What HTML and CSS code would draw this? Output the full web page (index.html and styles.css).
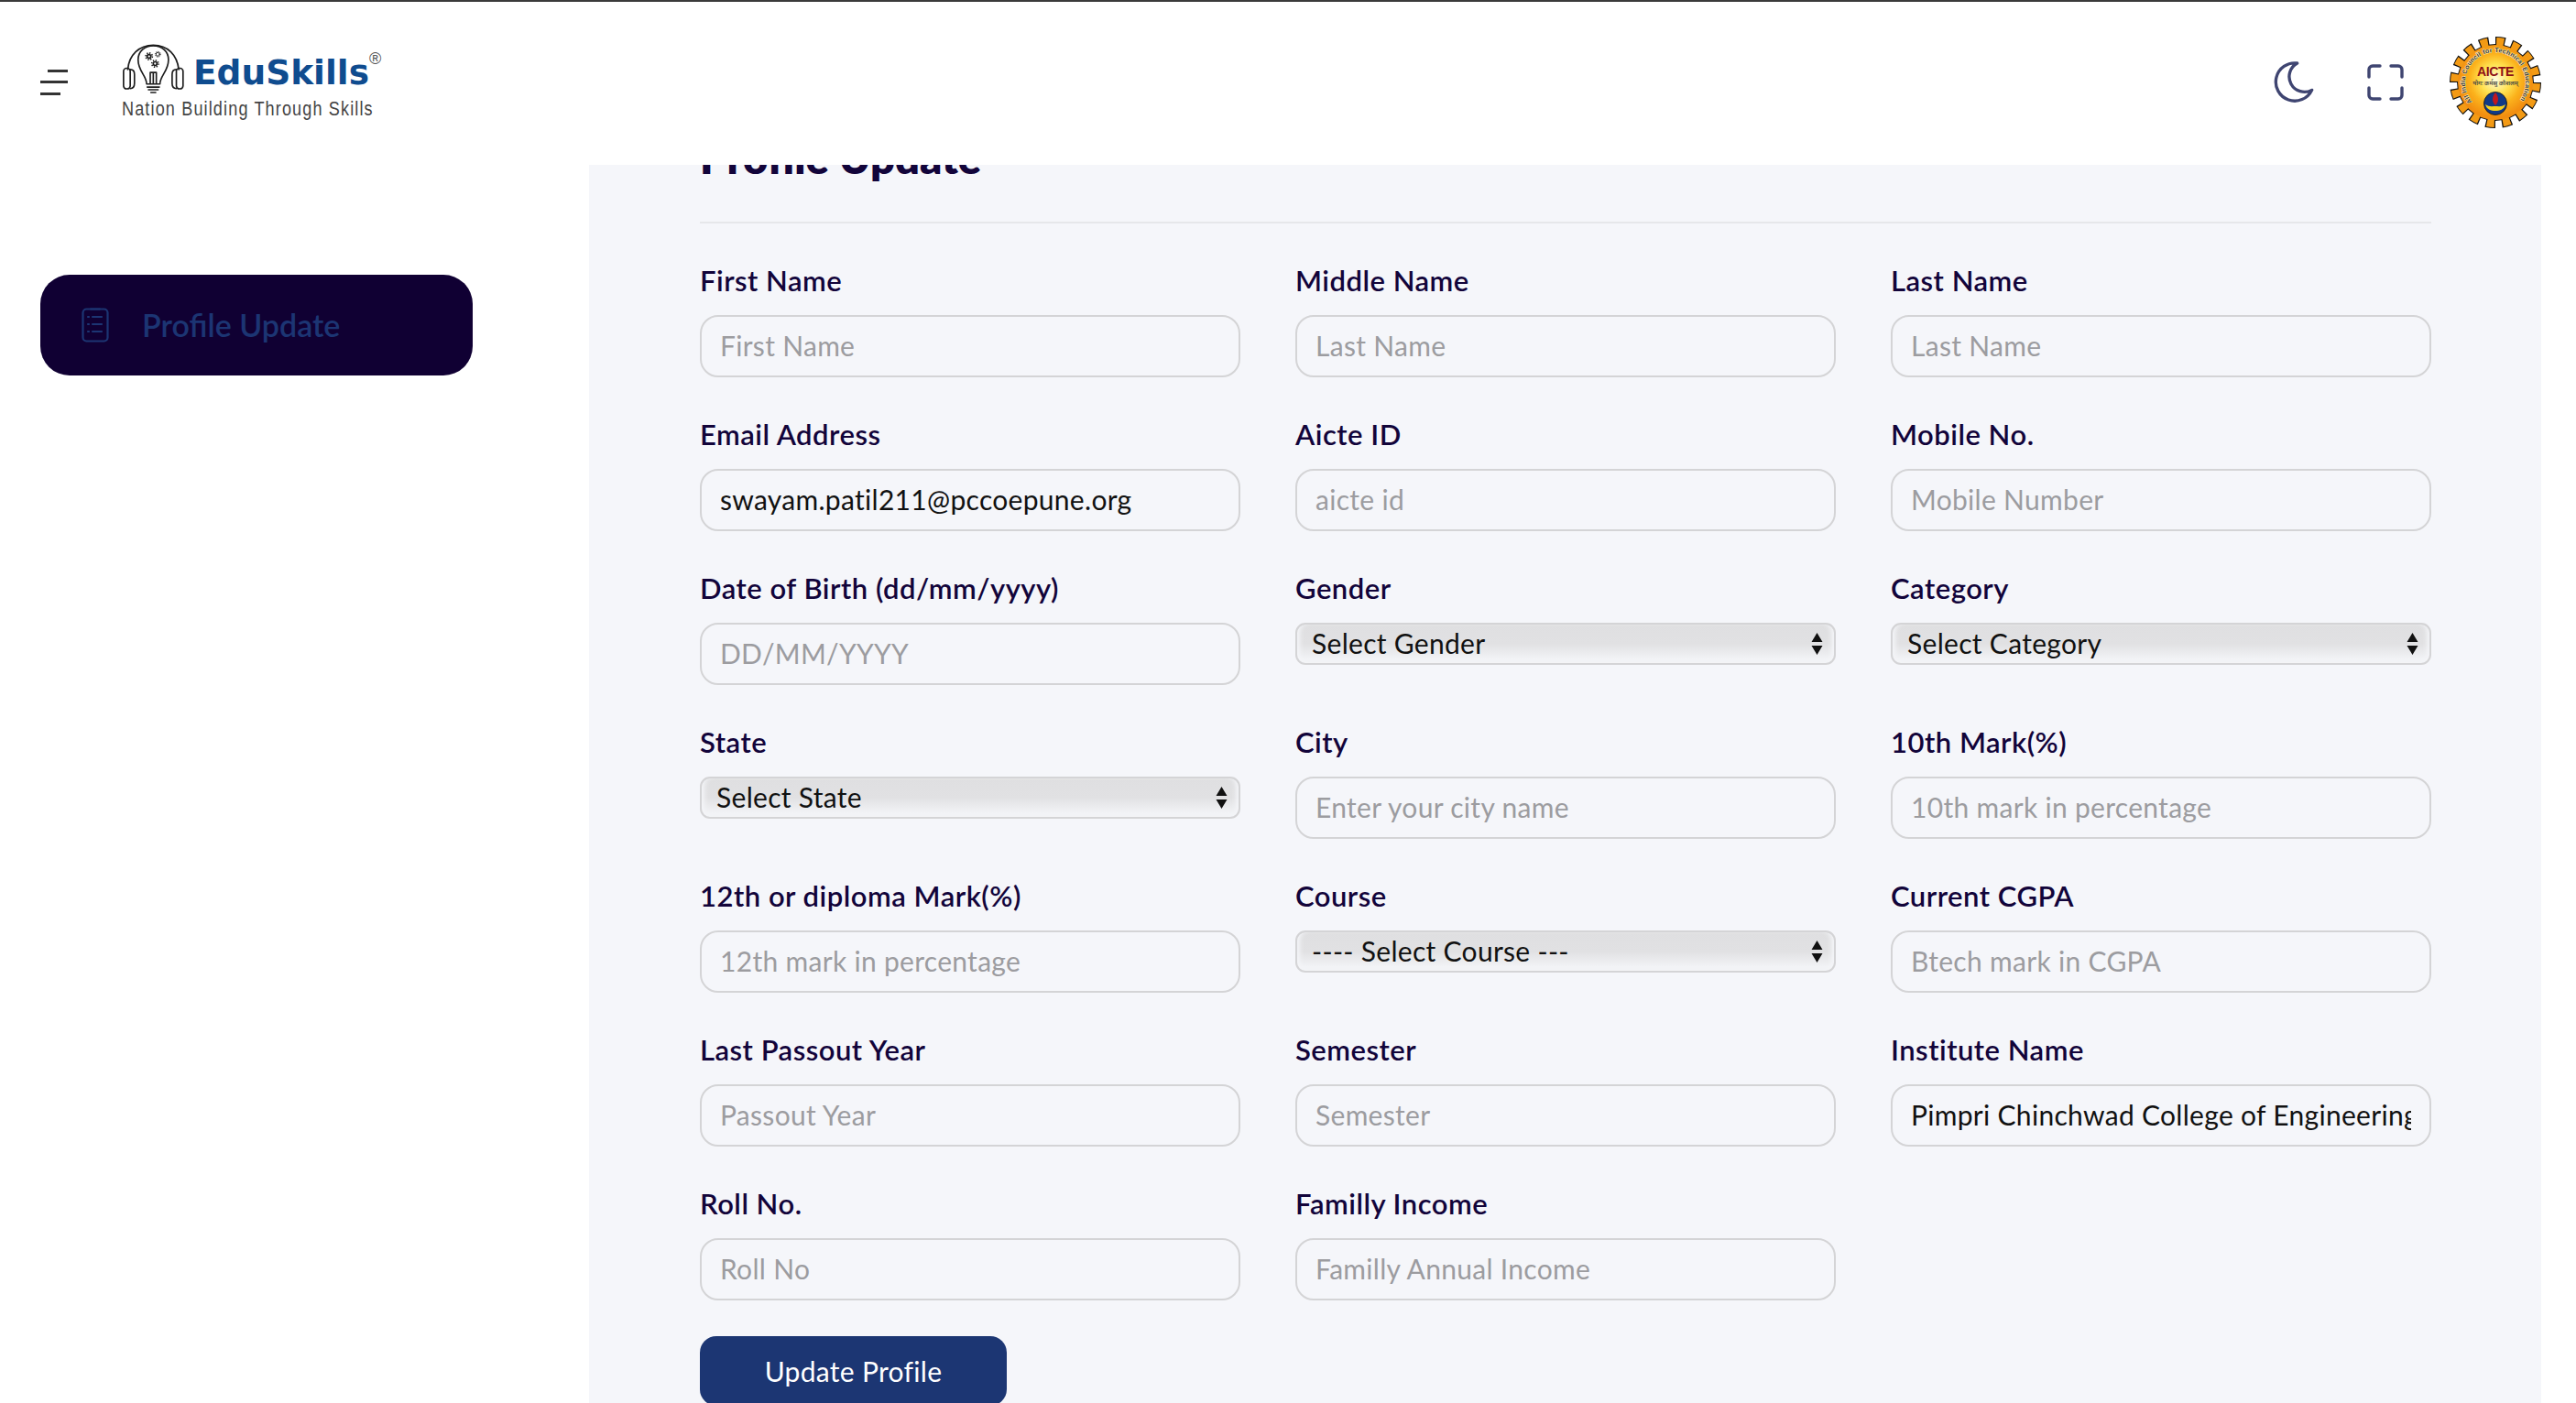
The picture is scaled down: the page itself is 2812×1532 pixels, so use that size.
FILE: index.html
```html
<!DOCTYPE html>
<html lang="en">
<head>
<meta charset="utf-8">
<title>Profile Update</title>
<link rel="stylesheet" href="styles.css">
</head>
<body>
<header class="topbar">
  <button class="burger" aria-label="Menu"><span class="b1"></span><span class="b2"></span><span class="b3"></span></button>
  <div class="logo">
    <div class="logo-top">
      <svg class="logo-icon" viewBox="60 50 225 175" fill="none" stroke="#1c1c1c" stroke-width="5" stroke-linecap="round" stroke-linejoin="round">
        <path d="M88 140C92 92 125 60 172 60C220 60 250 92 256 140"/>
        <rect x="74" y="136" width="22" height="68" rx="10"/>
        <path d="M96 140C106 140 110 146 110 156V186C110 198 104 203 96 203"/>
        <rect x="248" y="136" width="22" height="68" rx="10"/>
        <path d="M248 140C238 140 234 146 234 156V186C234 198 240 203 248 203"/>
        <path d="M150 188C150 160 122 146 122 108C122 80 144 62 172 62C200 62 222 80 222 108C222 146 194 160 194 188Z"/>
        <path d="M162 186V150H182V186M172 150V186"/>
        <path d="M152 198H192M156 207H188M164 216H180"/>
        <circle cx="158" cy="97" r="6" stroke-width="5"/>
        <circle cx="158" cy="97" r="11" stroke-width="5" stroke-dasharray="4 4.6" stroke-linecap="butt"/>
        <circle cx="187" cy="90" r="6" stroke-width="3"/>
        <circle cx="187" cy="90" r="9" stroke-width="3" stroke-dasharray="3 4" stroke-linecap="butt"/>
        <circle cx="178" cy="121" r="6" stroke-width="5"/>
        <circle cx="178" cy="121" r="11" stroke-width="5" stroke-dasharray="4 4.6" stroke-linecap="butt"/>
      </svg>
      <span class="logo-name">EduSkills</span>
      <span class="logo-reg">®</span>
    </div>
    <div class="logo-tag">Nation Building Through Skills</div>
  </div>
  <div class="top-actions">
    <svg class="moon" viewBox="245 198 135 140" fill="none" stroke="#3f4571" stroke-width="10" stroke-linecap="round" stroke-linejoin="round"><path d="M322 207A62 62 0 1 0 370 295A50 50 0 0 1 322 207Z"/></svg>
    <svg class="expand" viewBox="0 0 40 40" fill="none" stroke="#3f4571" stroke-width="3.4" stroke-linecap="round" stroke-linejoin="round">
      <path d="M2 14V6a4 4 0 0 1 4-4h8M26 2h8a4 4 0 0 1 4 4v8M38 26v8a4 4 0 0 1-4 4h-8M14 38H6a4 4 0 0 1-4-4v-8"/>
    </svg>
    <svg class="seal" viewBox="0 0 100 100">
      <defs>
        <radialGradient id="sealFill" cx="50%" cy="46%" r="50%">
          <stop offset="0" stop-color="#fffde0"/>
          <stop offset="0.4" stop-color="#ffe14f"/>
          <stop offset="0.68" stop-color="#fbb21c"/>
          <stop offset="1" stop-color="#f28e10"/>
        </radialGradient>
        <path id="sealArc" d="M24.700 71.200A33 33 0 1 1 75.300 71.200"/>
      </defs>
      <circle cx="50" cy="50" r="44.500" fill="none" stroke="#111" stroke-width="11" pathLength="160" stroke-dasharray="6 4"/>
      <circle cx="50" cy="50" r="42" fill="#111"/>
      <circle cx="50" cy="50" r="44.500" fill="none" stroke="#f39a14" stroke-width="9" pathLength="160" stroke-dasharray="4.600 5.400" stroke-dashoffset="-0.7"/>
      <circle cx="50" cy="50" r="41" fill="url(#sealFill)"/>
      <text class="seal-ring"><textPath href="#sealArc" textLength="146">All India Council for Technical Education</textPath></text>
      <text class="seal-title" x="50" y="43" text-anchor="middle">AICTE</text>
      <text class="seal-motto" x="50" y="53" text-anchor="middle">योगः कर्मसु कौशलम्</text>
      <circle cx="50" cy="73" r="12.5" fill="#123a86" stroke="#111" stroke-width="0.8"/>
      <path d="M50 61C54 66 54 71 50 75C46 71 46 66 50 61Z" fill="#c2181f"/>
      <path d="M39 74C43 77 47 76 50 76C53 76 57 77 61 74C59 80 55 81 50 81C45 81 41 80 39 74Z" fill="#f5d21f"/>
    </svg>
  </div>
</header>

<div class="shell">
  <aside class="sidebar">
    <a class="nav-pill">
      <svg class="nav-icon" viewBox="0 0 30 38" fill="none" stroke="#1c3573" stroke-width="2.2" stroke-linecap="round" stroke-linejoin="round">
        <rect x="1.5" y="1.5" width="27" height="35" rx="4"/>
        <path d="M10 1.500h10M7 10h1M12 10h10M7 18h1M12 18h10M7 26h1M12 26h10"/>
      </svg>
      <span class="nav-text">Profile Update</span>
    </a>
  </aside>

  <main class="panel">
    <div class="panel-inner">
      <h1 class="title">Profile Update</h1>
      <form class="form">
        <div class="field"><label>First Name</label><input type="text" placeholder="First Name"></div>
        <div class="field"><label>Middle Name</label><input type="text" placeholder="Last Name"></div>
        <div class="field"><label>Last Name</label><input type="text" placeholder="Last Name"></div>

        <div class="field"><label>Email Address</label><input type="text" value="swayam.patil211@pccoepune.org"></div>
        <div class="field"><label>Aicte ID</label><input type="text" placeholder="aicte id"></div>
        <div class="field"><label>Mobile No.</label><input type="text" placeholder="Mobile Number"></div>

        <div class="field"><label>Date of Birth (dd/mm/yyyy)</label><input type="text" placeholder="DD/MM/YYYY"></div>
        <div class="field"><label>Gender</label><div class="select-wrap"><select><option>Select Gender</option></select><svg class="arrows" viewBox="0 0 12 24"><path d="M6 0L12 10H0ZM0 14H12L6 24Z"/></svg></div></div>
        <div class="field"><label>Category</label><div class="select-wrap"><select><option>Select Category</option></select><svg class="arrows" viewBox="0 0 12 24"><path d="M6 0L12 10H0ZM0 14H12L6 24Z"/></svg></div></div>

        <div class="field"><label>State</label><div class="select-wrap"><select><option>Select State</option></select><svg class="arrows" viewBox="0 0 12 24"><path d="M6 0L12 10H0ZM0 14H12L6 24Z"/></svg></div></div>
        <div class="field"><label>City</label><input type="text" placeholder="Enter your city name"></div>
        <div class="field"><label>10th Mark(%)</label><input type="text" placeholder="10th mark in percentage"></div>

        <div class="field"><label>12th or diploma Mark(%)</label><input type="text" placeholder="12th mark in percentage"></div>
        <div class="field"><label>Course</label><div class="select-wrap"><select><option>---- Select Course ---</option></select><svg class="arrows" viewBox="0 0 12 24"><path d="M6 0L12 10H0ZM0 14H12L6 24Z"/></svg></div></div>
        <div class="field"><label>Current CGPA</label><input type="text" placeholder="Btech mark in CGPA"></div>

        <div class="field"><label>Last Passout Year</label><input type="text" placeholder="Passout Year"></div>
        <div class="field"><label>Semester</label><input type="text" placeholder="Semester"></div>
        <div class="field"><label>Institute Name</label><input type="text" value="Pimpri Chinchwad College of Engineering"></div>

        <div class="field"><label>Roll No.</label><input type="text" placeholder="Roll No"></div>
        <div class="field"><label>Familly Income</label><input type="text" placeholder="Familly Annual Income"></div>
      </form>
      <button class="submit" type="button">Update Profile</button>
    </div>
  </main>
</div>
</body>
</html>
```
FILE: styles.css
```css
* { box-sizing: border-box; }
html, body { margin: 0; height: 100%; }
body {
  height: 100vh;
  overflow: hidden;
  display: flex;
  flex-direction: column;
  background: #fff;
  font-family: "Lato", "Noto Sans", sans-serif;
  color: #12043a;
}
.topbar {
  flex: 0 0 180px;
  display: flex;
  align-items: center;
  border-top: 2px solid #3a3a3a;
  background: #fff;
  padding: 0 38px 0 44px;
}
.burger {
  width: 30px;
  height: 28px;
  padding: 0;
  border: 0;
  background: none;
  display: flex;
  flex-direction: column;
  justify-content: space-between;
  margin-top: -3px;
}
.burger span { display: block; height: 3px; background: #333; }
.b1 { width: 22px; margin-left: 8px; }
.b2 { width: 30px; }
.b3 { width: 22px; }
.logo {
  margin-left: 59px;
  margin-top: -4px;
  display: flex;
  flex-direction: column;
}
.logo-top { display: flex; align-items: flex-end; height: 58px; }
.logo-icon { width: 75px; height: 58px; margin-left: -3px; }
.logo-name {
  font-family: "DejaVu Sans", "Liberation Sans", sans-serif;
  font-weight: 700;
  font-size: 37.5px;
  line-height: 44px;
  color: #0f4c8f;
  margin-left: 6px;
  margin-bottom: 3px;
}
.logo-reg {
  font-family: "Liberation Sans", sans-serif;
  font-size: 18px;
  line-height: 18px;
  color: #555;
  align-self: flex-start;
  margin-top: 9px;
}
.logo-tag {
  font-family: "Liberation Sans", sans-serif;
  font-size: 22px;
  line-height: 26px;
  letter-spacing: 1.4px;
  color: #444;
  white-space: nowrap;
  margin-top: 2px;
  transform: scaleX(0.82);
  transform-origin: left center;
}
.top-actions { margin-left: auto; margin-top: -2px; display: flex; align-items: center; }
.moon { width: 45px; height: 46.7px; margin-right: 57px; margin-top: -1px; }
.expand { width: 40px; height: 40px; margin-right: 50px; margin-top: -1px; }
.seal { width: 100px; height: 100px; }
.seal-ring {
  font: 700 7px "Liberation Sans", sans-serif;
  fill: #333;
  stroke: #fff3c8;
  stroke-width: 0.9;
  paint-order: stroke;
}
.seal-title { font: 700 14px "Liberation Sans", sans-serif; fill: #8e1015; letter-spacing: -0.4px; }
.seal-motto { font: 600 6.6px "Noto Sans", "Noto Sans CJK SC", sans-serif; fill: #444; }

.shell { flex: 1; min-height: 0; display: flex; padding-right: 38px; }
.sidebar { flex: 0 0 643px; padding: 120px 0 0 44px; }
.nav-pill {
  width: 472px;
  height: 110px;
  border-radius: 32px;
  background: #100033;
  display: flex;
  align-items: center;
  padding-left: 45px;
  gap: 36px;
  color: #1c3573;
  font-size: 34px;
  font-weight: 600;
}
.nav-text { padding-bottom: 2px; }
.nav-icon { width: 30px; height: 38px; }
.panel {
  flex: 1;
  min-width: 0;
  background: #f5f6fa;
  overflow: hidden;
  padding: 0 120px 0 121px;
}
.panel-inner { margin-top: -36px; }
.title {
  margin: 0;
  font-size: 47px;
  line-height: 56px;
  font-weight: 800;
  color: #12043a;
  padding-bottom: 42px;
  border-bottom: 2px solid #e6e7ea;
}
.form {
  display: grid;
  grid-template-columns: repeat(3, 590px);
  column-gap: 60px;
  row-gap: 45px;
  margin-top: 45px;
}
.field label {
  display: block;
  font-size: 31px;
  line-height: 35px;
  font-weight: 600;
  letter-spacing: 0.5px;
  margin-bottom: 20px;
  color: #12043a;
}
.field input {
  display: block;
  width: 100%;
  height: 68px;
  border: 2px solid #d4d4d6;
  border-radius: 20px;
  background: transparent;
  padding: 0 20px 3px;
  font: 400 30px "Lato", "Noto Sans", sans-serif;
  letter-spacing: 0.3px;
  color: #111;
  outline: none;
}
.field input::placeholder { color: #9c9ca0; opacity: 1; }
.select-wrap { position: relative; margin-top: 2px; height: 46px; }
.select-wrap select {
  appearance: none;
  display: block;
  width: 100%;
  height: 46px;
  border: 2px solid #d4d4d6;
  border-radius: 11px;
  padding: 0 40px 2px 16px;
  font: 400 30px "Lato", "Noto Sans", sans-serif;
  letter-spacing: 0.3px;
  color: #111;
  background: linear-gradient(#dfdfe1 0%, #e1e1e3 50%, #f2f3f6 90%);
  box-shadow: inset 6px 0 5px -3px #f4f5f8, inset -6px 0 5px -3px #f4f5f8;
}
.arrows {
  position: absolute;
  right: 14px;
  top: 11px;
  width: 13px;
  height: 24px;
  fill: #111;
  pointer-events: none;
}
.submit {
  display: block;
  width: 335px;
  height: 76px;
  margin-top: 39px;
  border: 0;
  border-radius: 18px;
  background: #1c3673;
  color: #fff;
  font: 400 30px "Lato", "Noto Sans", sans-serif;
  letter-spacing: 0.3px;
}
```
